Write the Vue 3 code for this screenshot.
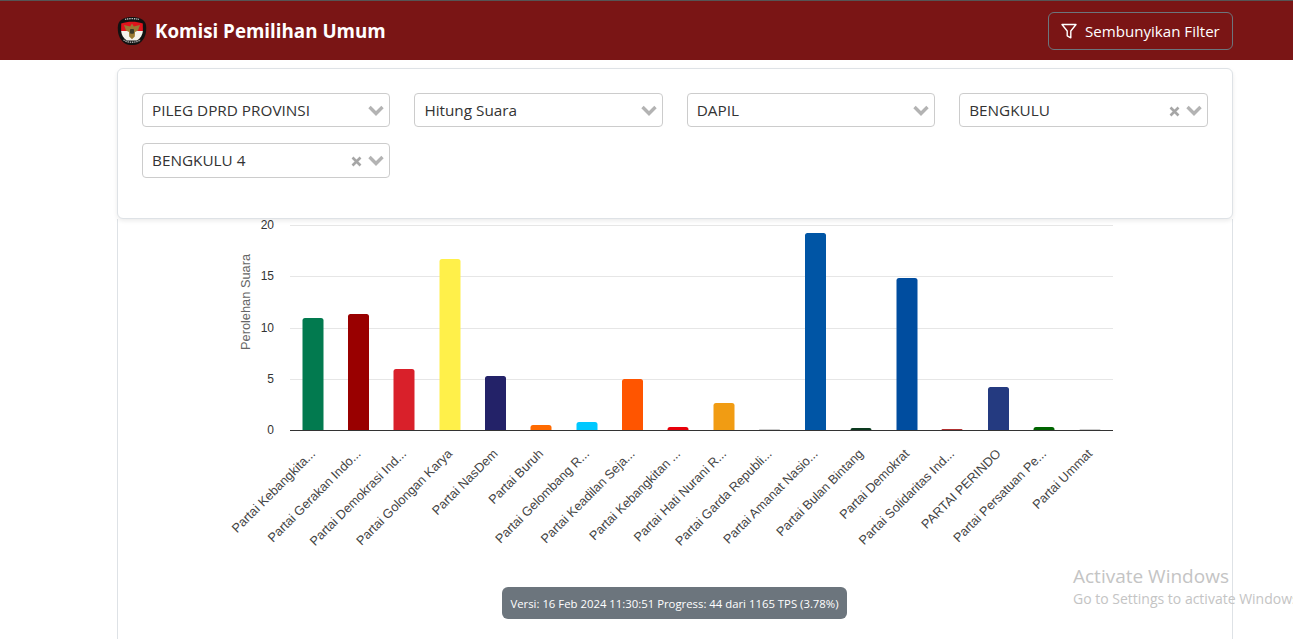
<script setup>
const bars = [
  { label: 'Partai Kebangkita...', cx: 313, top: 318, color: '#027a4f' },
  { label: 'Partai Gerakan Indo...', cx: 358.5, top: 314, color: '#990000' },
  { label: 'Partai Demokrasi Ind...', cx: 404, top: 369, color: '#d9202a' },
  { label: 'Partai Golongan Karya', cx: 450, top: 259, color: '#fff04a' },
  { label: 'Partai NasDem', cx: 495.5, top: 376, color: '#232268' },
  { label: 'Partai Buruh', cx: 541, top: 425, color: '#ff6a00' },
  { label: 'Partai Gelombang R...', cx: 587, top: 422, color: '#00c8ff' },
  { label: 'Partai Keadilan Seja...', cx: 632.5, top: 379, color: '#ff5500' },
  { label: 'Partai Kebangkitan ...', cx: 678, top: 427, color: '#e8000a' },
  { label: 'Partai Hati Nurani R...', cx: 724, top: 403, color: '#f19c13' },
  { label: 'Partai Garda Republi...', cx: 769.5, top: 429.6, color: '#999999' },
  { label: 'Partai Amanat Nasio...', cx: 815.5, top: 233, color: '#0055a5' },
  { label: 'Partai Bulan Bintang', cx: 861, top: 428, color: '#0c3a1f' },
  { label: 'Partai Demokrat', cx: 907, top: 278, color: '#004d9f' },
  { label: 'Partai Solidaritas Ind...', cx: 952, top: 429, color: '#b03030' },
  { label: 'PARTAI PERINDO', cx: 998.5, top: 387, color: '#243a80' },
  { label: 'Partai Persatuan Pe...', cx: 1044, top: 427, color: '#006400' },
  { label: 'Partai Ummat', cx: 1090, top: 429.6, color: '#999999' },
]
const ticks = [
  { v: 20, y: 225 },
  { v: 15, y: 276 },
  { v: 10, y: 328 },
  { v: 5, y: 379 },
  { v: 0, y: 430 },
]
const barPath = (b) => {
  const h = 430 - b.top
  const r = Math.min(2.5, h)
  const l = b.cx - 10.5
  const w = 21
  return `M${l} 430V${b.top + r}Q${l} ${b.top} ${l + r} ${b.top}H${l + w - r}Q${l + w} ${b.top} ${l + w} ${b.top + r}V430Z`
}
const selects = [
  { text: 'PILEG DPRD PROVINSI', clear: false },
  { text: 'Hitung Suara', clear: false },
  { text: 'DAPIL', clear: false },
  { text: 'BENGKULU', clear: true },
  { text: 'BENGKULU 4', clear: true },
]
</script>

<template>
  <div class="page">
    <header class="navbar">
      <div class="nav-inner">
        <div class="brand">
          <svg class="logo" width="30" height="30" viewBox="0 0 30 30">
            <path d="M15 1 C22 1 28 3.5 29 9 C30 16 28 24 22 27.5 C18 29.5 12 29.5 8 27.5 C2 24 0 16 1 9 C2 3.5 8 1 15 1Z" fill="#111" />
            <path d="M8 3.4 C12 2.4 18 2.4 22 3.4" fill="none" stroke="#bbb" stroke-width="1.4" stroke-dasharray="1.4 0.8" />
            <path d="M4.2 7.6 C11 5.2 19 5.2 25.8 7.6 L25.9 15 L4.1 15Z" fill="#e0141c" />
            <path d="M4.1 15 L25.9 15 C25.6 19 23.4 22.4 20 24.4 L10 24.4 C6.6 22.4 4.4 19 4.1 15Z" fill="#f4f1ea" />
            <path d="M15 7.6 L16.8 10.6 L23 9 L21 14.6 L18 16 L17.8 20.4 L15 23.2 L12.2 20.4 L12 16 L9 14.6 L7 9 L13.2 10.6Z" fill="#9a7a35" />
            <rect x="13" y="13" width="4" height="4.8" rx="1" fill="#3a3a2a" />
            <path d="M6.5 24 C11 27 19 27 23.5 24" fill="none" stroke="#aaa" stroke-width="1.4" stroke-dasharray="1.4 0.8" />
          </svg>
          <span class="brand-text">Komisi Pemilihan Umum</span>
        </div>
        <button class="filter-btn" type="button">
          <svg width="16" height="16" viewBox="0 0 16 16" fill="none" stroke="#fff" stroke-width="1.4" stroke-linejoin="round">
            <path d="M1 1.5H15L9.8 8V14.8L6.2 12.8V8Z" />
          </svg>
          <span>Sembunyikan Filter</span>
        </button>
      </div>
    </header>

    <main class="container">
      <section class="filter-card">
        <div class="select-grid">
          <div v-for="s in selects" :key="s.text" class="select">
            <span class="select-text">{{ s.text }}</span>
            <svg v-if="s.clear" class="clear" width="11" height="11" viewBox="0 0 11 11">
              <path d="M1.5 1.5L9.5 9.5M9.5 1.5L1.5 9.5" stroke="#a6a6a6" stroke-width="2.6" fill="none" />
            </svg>
            <svg class="chevron" width="16" height="11" viewBox="0 0 16 11">
              <path d="M1.5 2L8 8.5L14.5 2" stroke="#b3b3b3" stroke-width="3.4" fill="none" />
            </svg>
          </div>
        </div>
      </section>

      <section class="chart-card">
        <svg class="chart" width="1114" height="430" viewBox="118 219 1114 430">
          <g v-for="t in ticks" :key="t.v">
            <line v-if="t.v !== 0" x1="290" x2="1113" :y1="t.y + 0.5" :y2="t.y + 0.5" stroke="#e6e6e6" />
            <text x="274" :y="t.y + 4" text-anchor="end" class="tick">{{ t.v }}</text>
          </g>
          <text class="axis-title" transform="translate(250 302) rotate(-90)" text-anchor="middle">Perolehan Suara</text>
          <path v-for="b in bars" :key="b.label" :d="barPath(b)" :fill="b.color" />
          <line x1="290" x2="1113" y1="430.5" y2="430.5" stroke="#333" />
          <text
            v-for="b in bars"
            :key="'l' + b.label"
            class="cat"
            text-anchor="end"
            :transform="`translate(${b.cx + 3} 454.5) rotate(-45)`"
          >{{ b.label }}</text>
        </svg>
      </section>
    </main>

    <div class="toast">Versi: 16 Feb 2024 11:30:51 Progress: 44 dari 1165 TPS (3.78%)</div>

    <div class="watermark">
      <div class="wm-title">Activate Windows</div>
      <div class="wm-sub">Go to Settings to activate Windows.</div>
    </div>
  </div>
</template>

<style>
html, body { margin: 0; overflow: hidden; background: #fff; }
</style>

<style scoped>
.page {
  position: relative;
  width: 1293px;
  height: 639px;
  overflow: hidden;
  font-family: "Open Sans", "Noto Sans", sans-serif;
  color: #333;
}
.navbar {
  height: 60px;
  box-sizing: border-box;
  background: #7a1515;
  border-top: 1px solid #555;
}
.nav-inner {
  width: 1116px;
  height: 100%;
  margin-left: 117px;
  display: flex;
  align-items: center;
  justify-content: space-between;
}
.brand { display: flex; align-items: center; gap: 8px; }
.brand-text { color: #fff; font-weight: 700; font-size: 18.75px; }
.filter-btn {
  display: flex;
  align-items: center;
  gap: 8px;
  width: 185px;
  height: 38px;
  box-sizing: border-box;
  padding: 0 12px;
  background: transparent;
  border: 1px solid #6c757d;
  border-radius: 6px;
  color: #fff;
  font-family: inherit;
  font-size: 15.1px;
  white-space: nowrap;
}
.container {
  width: 1116px;
  margin-left: 117px;
  padding-top: 8px;
}
.filter-card {
  position: relative;
  z-index: 1;
  height: 151px;
  box-sizing: border-box;
  padding: 24px 24.5px 24px 24px;
  background: #fff;
  border: 1px solid #dee2e6;
  border-radius: 6px;
  box-shadow: 0 2px 4px rgba(0, 0, 0, 0.08);
}
.select-grid {
  display: grid;
  grid-template-columns: repeat(4, 1fr);
  column-gap: 24px;
  row-gap: 16px;
}
.select {
  display: flex;
  align-items: center;
  height: 34px;
  box-sizing: border-box;
  padding: 0 4px 0 9px;
  border: 1px solid #ccc;
  border-radius: 4px;
  background: #fff;
}
.select:nth-child(5) { height: 35px; padding-bottom: 1px; }
.select-text { flex: 1; font-size: 15.3px; color: #333; white-space: nowrap; }
.clear { margin-right: 6px; margin-top: 3px; }
.chevron { margin-right: 1px; }
.chart-card {
  height: 430px;
  box-sizing: border-box;
  border: 1px solid #dee2e6;
  border-top: 0;
  background: #fff;
}
.chart { display: block; }
.tick { font: 12px "Liberation Sans", Arial, sans-serif; fill: #333; }
.axis-title { font: 12.8px "Liberation Sans", Arial, sans-serif; fill: #666; }
.cat { font: 12.8px "Liberation Sans", Arial, sans-serif; fill: #444; }
.toast {
  position: absolute;
  left: 502px;
  top: 587px;
  width: 345px;
  height: 32px;
  box-sizing: border-box;
  display: flex;
  align-items: center;
  justify-content: center;
  background: #6c757d;
  border-radius: 6px;
  color: #fff;
  font-size: 11.35px;
  white-space: nowrap;
}
.watermark {
  position: absolute;
  left: 1073px;
  top: 564px;
  white-space: nowrap;
  color: #c4c4c4;
}
.wm-title { font-size: 19px; line-height: 24px; }
.wm-sub { font-size: 14px; line-height: 20px; margin-top: 1px; }
</style>
